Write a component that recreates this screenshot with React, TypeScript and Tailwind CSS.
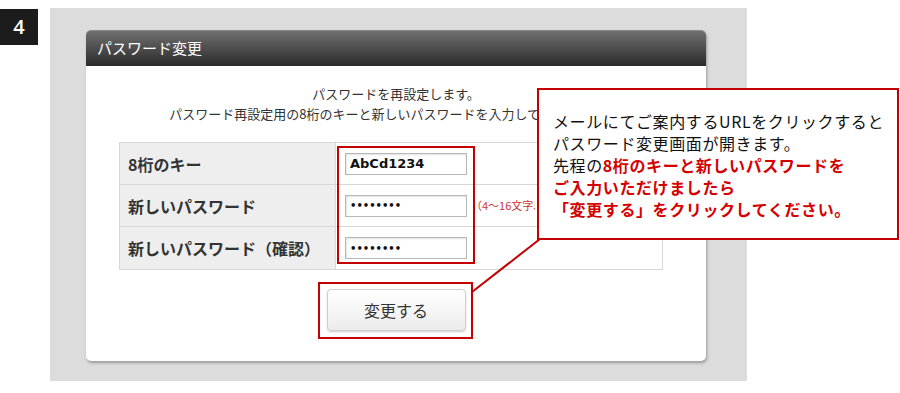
const jp = '"Noto Sans CJK JP", "Noto Sans", sans-serif';

const rows = [
  { label: '8桁のキー', value: 'AbCd1234', secret: false, hint: false },
  { label: '新しいパスワード', value: '••••••••', secret: true, hint: true },
  { label: '新しいパスワード（確認）', value: '••••••••', secret: true, hint: false },
];

export default function App() {
  return (
    <div className="relative w-[900px] h-[393px] bg-white overflow-hidden" style={{ fontFamily: jp }}>
      <div className="flex items-start">
        <div className="mt-[9px] w-[38px] h-[36px] bg-[#1c1c1c] text-white flex items-center justify-center text-[20px] font-semibold" style={{ fontFamily: '"Open Sans", sans-serif' }}>
          4
        </div>
        <div className="ml-[12px] mt-[8px] w-[697px] h-[373px] bg-[#dcdcdc] pt-[22px] pl-[36px]">
          <div className="w-[620px] h-[331px] bg-white rounded-[5px] shadow-[1px_2px_3px_rgba(0,0,0,0.3)]">
            <div className="h-[36px] rounded-t-[5px] bg-gradient-to-b from-[#707070] to-[#2c2c2c] border-t border-[#8a8a8a] text-white text-[15px] pl-[11px] flex items-center">
              パスワード変更
            </div>
            <div className="pt-[18px] text-center text-[13px] leading-[20px] text-[#333]">
              <p>パスワードを再設定します。</p>
              <p className="-ml-[18px]">パスワード再設定用の8桁のキーと新しいパスワードを入力してください。</p>
            </div>
            <div className="ml-[33px] mt-[18px] w-[544px] border border-[#d8d8d8]">
              {rows.map((r, i) => (
                <div key={i} className={`flex h-[42px] ${i < 2 ? 'border-b border-[#d8d8d8]' : ''}`}>
                  <div className="w-[216px] bg-[#eeeeee] border-r border-[#d8d8d8] pl-[8px] flex items-center text-[16px] font-bold text-[#333]">
                    {r.label}
                  </div>
                  <div className="flex items-center pl-[9px]">
                    <div
                      className={`w-[122px] h-[22px] border border-[#b8b8b8] shadow-[inset_1px_1px_2px_rgba(0,0,0,0.12)] flex items-center pl-[4px] text-[#111] ${r.secret ? 'text-[10px] font-bold' : 'text-[13px] font-bold'}`}
                      style={{ fontFamily: '"DejaVu Sans", sans-serif' }}
                    >
                      {r.value}
                    </div>
                    {r.hint && (
                      <span className="ml-[4px] max-w-[64px] overflow-hidden text-[11px] text-[#cc3333] whitespace-nowrap">（4～16文字以内の半角英数字）</span>
                    )}
                  </div>
                </div>
              ))}
            </div>
            <div className="mt-[19px] flex justify-center">
              <div className="w-[139px] h-[42px] rounded-[4px] border border-[#cfcfcf] bg-gradient-to-b from-white to-[#ececec] shadow-[0_1px_2px_rgba(0,0,0,0.2)] flex items-center justify-center text-[16px] text-[#333]">
                変更する
              </div>
            </div>
          </div>
        </div>
      </div>

      <div className="absolute left-[337px] top-[146px] w-[138px] h-[118px] border-2 border-[#c40000]" />
      <div className="absolute left-[318px] top-[282px] w-[155px] h-[57px] border-2 border-[#c40000]" />
      <svg className="absolute left-0 top-0" width="900" height="393">
        <line x1="472" y1="292" x2="540" y2="239" stroke="#c40000" strokeWidth="2" />
      </svg>
      <div className="absolute left-[537px] top-[88px] w-[362px] h-[152px] border-2 border-[#c40000] bg-white pl-[14px] pt-[20px] text-[16px] leading-[22px] tracking-[0.6px] text-[#111]">
        <p>メールにてご案内するURLをクリックすると</p>
        <p>パスワード変更画面が開きます。</p>
        <p>
          先程の<span className="font-bold text-[#d40000]">8桁のキーと新しいパスワードを</span>
        </p>
        <p className="font-bold text-[#d40000]">ご入力いただけましたら</p>
        <p className="font-bold text-[#d40000]">「変更する」をクリックしてください。</p>
      </div>
    </div>
  );
}
